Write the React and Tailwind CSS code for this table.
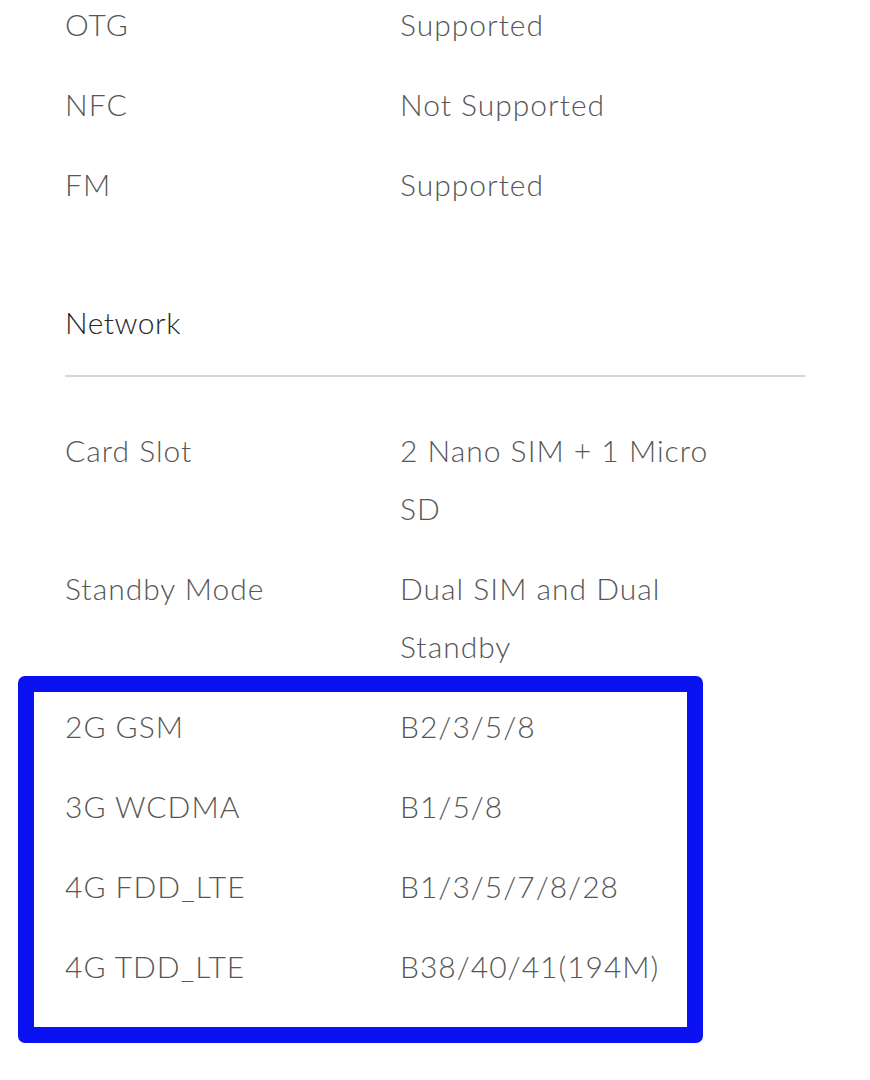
import React from 'react';

const top = [
  ['OTG', 'Supported'],
  ['NFC', 'Not Supported'],
  ['FM', 'Supported'],
];

const network = [
  ['Card Slot', '2 Nano SIM + 1 Micro SD'],
  ['Standby Mode', 'Dual SIM and Dual Standby'],
];

const bands = [
  ['2G GSM', 'B2/3/5/8'],
  ['3G WCDMA', 'B1/5/8'],
  ['4G FDD_LTE', 'B1/3/5/7/8/28'],
  ['4G TDD_LTE', 'B38/40/41(194M)'],
];

function Row({ label, value }) {
  return (
    <div className="flex text-[30px] leading-[58px] tracking-[1px] text-[#565656] font-light">
      <div className="w-[335px] shrink-0">{label}</div>
      <div className="w-[318px]">{value}</div>
    </div>
  );
}

export default function App() {
  return (
    <div className="w-[870px] h-[1080px] overflow-hidden bg-white font-['Lato','Liberation_Sans',sans-serif]">
      <div className="px-[65px] -mt-[5px] flex flex-col gap-[22px]">
        {top.map(([l, v]) => (
          <Row key={l} label={l} value={v} />
        ))}
      </div>

      <div className="mt-[80px] px-[65px]">
        <h3 className="text-[30px] leading-[58px] tracking-[0.5px] font-light text-[#262626]">Network</h3>
        <div className="mt-[24px] w-[740px] h-[2px] bg-[#d6d6d6]"></div>
      </div>

      <div className="mt-[44px] px-[65px] flex flex-col gap-[22px]">
        {network.map(([l, v]) => (
          <Row key={l} label={l} value={v} />
        ))}
      </div>

      <div className="mt-[1px] ml-[18px] w-[685px] border-[16px] border-[#0a12f2] rounded-[7px] pl-[31px] pt-[5px] pb-[32px] flex flex-col gap-[22px]">
        {bands.map(([l, v]) => (
          <Row key={l} label={l} value={v} />
        ))}
      </div>
    </div>
  );
}
